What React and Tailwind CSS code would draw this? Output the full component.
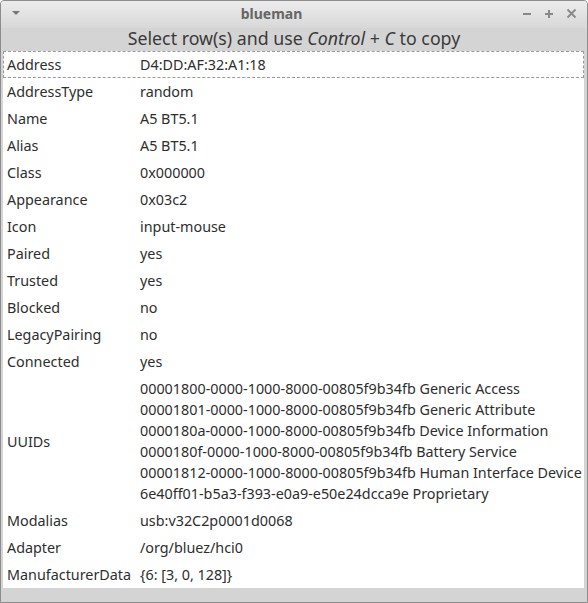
import React from "react";

const rows = [
  ["Address", ["D4:DD:AF:32:A1:18"]],
  ["AddressType", ["random"]],
  ["Name", ["A5 BT5.1"]],
  ["Alias", ["A5 BT5.1"]],
  ["Class", ["0x000000"]],
  ["Appearance", ["0x03c2"]],
  ["Icon", ["input-mouse"]],
  ["Paired", ["yes"]],
  ["Trusted", ["yes"]],
  ["Blocked", ["no"]],
  ["LegacyPairing", ["no"]],
  ["Connected", ["yes"]],
  [
    "UUIDs",
    [
      "00001800-0000-1000-8000-00805f9b34fb Generic Access",
      "00001801-0000-1000-8000-00805f9b34fb Generic Attribute",
      "0000180a-0000-1000-8000-00805f9b34fb Device Information",
      "0000180f-0000-1000-8000-00805f9b34fb Battery Service",
      "00001812-0000-1000-8000-00805f9b34fb Human Interface Device",
      "6e40ff01-b5a3-f393-e0a9-e50e24dcca9e Proprietary",
    ],
  ],
  ["Modalias", ["usb:v32C2p0001d0068"]],
  ["Adapter", ["/org/bluez/hci0"]],
  ["ManufacturerData", ["{6: [3, 0, 128]}"]],
];

export default function App() {
  return (
    <div
      className="w-[588px] h-[603px] flex flex-col border border-[#8c8c8c] rounded-t-[4px] bg-[#d4d4d4] text-[#2e2e2e] overflow-hidden"
      style={{ fontFamily: '"Noto Sans", "Open Sans", sans-serif' }}
    >
      <div className="h-[27px] shrink-0 flex items-center px-[8px] bg-gradient-to-b from-[#ececec] to-[#d8d8d8]">
        <svg width="10" height="6" viewBox="0 0 10 6" className="ml-[2px] -mt-[3px]">
          <path d="M1 1 L9 1 L5 5 Z" fill="#777" />
        </svg>
        <div className="flex-1 text-center text-[14px] leading-[20px] font-bold text-[#666] -mt-[1px]">blueman</div>
        <div className="flex items-center gap-[12px] pr-[2px] -mt-[2px]">
          <svg width="10" height="10" viewBox="0 0 10 10">
            <path d="M1 5 H9" stroke="#888" strokeWidth="2" />
          </svg>
          <svg width="10" height="10" viewBox="0 0 10 10">
            <path d="M1 5 H9 M5 1 V9" stroke="#888" strokeWidth="2" />
          </svg>
          <svg width="11" height="11" viewBox="0 0 11 11">
            <path d="M1.5 1.5 L9.5 9.5 M9.5 1.5 L1.5 9.5" stroke="#888" strokeWidth="1.8" />
          </svg>
        </div>
      </div>
      <div className="h-[23px] shrink-0 flex justify-center text-[17.75px] leading-[20px] text-[#3a3a3a]">
        <span>
          Select row(s) and use <i>Control</i> + <i>C</i> to copy
        </span>
      </div>
      <div className="ml-[2px] mr-[3px] bg-white flex flex-col text-[14.35px] leading-[21px]">
        {rows.map(([k, vals], i) => (
          <div
            key={k}
            className={
              "flex items-center py-[3px] " +
              (i === 0 ? "outline outline-1 outline-dashed outline-[#9a9a9a] -outline-offset-1" : "")
            }
          >
            <div className="w-[137px] shrink-0 pl-[4px] whitespace-nowrap">{k}</div>
            <div className="flex flex-col whitespace-nowrap">
              {vals.map((v) => (
                <div key={v}>{v}</div>
              ))}
            </div>
          </div>
        ))}
      </div>
      <div className="flex-1" />
    </div>
  );
}
